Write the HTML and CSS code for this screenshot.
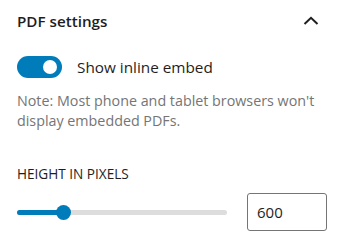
FILE: index.html
```html
<!DOCTYPE html>
<html lang="en">
<head>
    <meta charset="UTF-8">
    <meta name="viewport" content="width=device-width, initial-scale=1.0">
    <title>PDF settings</title>
    <link rel="stylesheet" href="styles.css">
</head>
<body>
    <div class="panel">
        <div class="panel-header">
            <h2>PDF settings</h2>
            <svg class="chevron" width="16" height="10" viewBox="0 0 16 10">
                <path d="M1.5 8 L8 1.8 L14.5 8" fill="none" stroke="#1e1e1e" stroke-width="2"/>
            </svg>
        </div>
        <div class="toggle-row">
            <span class="toggle"><span class="knob"></span></span>
            <span class="toggle-label">Show inline embed</span>
        </div>
        <p class="help">Note: Most phone and tablet browsers won't display embedded PDFs.</p>
        <div class="field-label">HEIGHT IN PIXELS</div>
        <div class="range-row">
            <div class="slider">
                <div class="track"></div>
                <div class="fill" style="width: 46px"></div>
                <div class="thumb" style="left: 46px"></div>
            </div>
            <input class="number" type="text" value="600">
        </div>
    </div>
</body>
</html>
```

FILE: styles.css
```css
body {
    margin: 0;
    background: #fff;
    color: #1e1e1e;
    font-family: "Open Sans", "Noto Sans", sans-serif;
}
.panel {
    padding: 0 17px;
}
.panel-header {
    display: flex;
    justify-content: space-between;
    align-items: center;
    height: 42px;
}
.panel-header h2 {
    margin: 0;
    font-size: 15.2px;
    font-weight: 600;
    line-height: 20px;
}
.chevron {
    margin-right: 9px;
}
.toggle-row {
    display: flex;
    align-items: center;
    margin-top: 14px;
    height: 22px;
}
.toggle {
    position: relative;
    width: 45px;
    height: 22px;
    border-radius: 11px;
    background: #007cba;
    margin-right: 15px;
}
.toggle .knob {
    position: absolute;
    top: 4px;
    right: 5px;
    width: 14px;
    height: 14px;
    border-radius: 50%;
    background: #fff;
}
.toggle-label {
    font-size: 15.3px;
}
.help {
    margin: 13px 0 0;
    font-size: 14.3px;
    line-height: 20px;
    color: #757575;
}
.field-label {
    margin-top: 35px;
    font-size: 13.6px;
    font-weight: 500;
    line-height: 16px;
}
.range-row {
    display: flex;
    align-items: center;
    gap: 20px;
    margin-top: 11px;
}
.slider {
    position: relative;
    width: 210px;
    height: 38px;
}
.slider .track,
.slider .fill {
    position: absolute;
    left: 0;
    top: 17px;
    height: 5px;
    border-radius: 3px;
}
.slider .track {
    width: 100%;
    background: #ddd;
}
.slider .fill {
    background: #007cba;
}
.slider .thumb {
    position: absolute;
    top: 12px;
    width: 15px;
    height: 15px;
    margin-left: -7px;
    border-radius: 50%;
    background: #007cba;
}
.number {
    box-sizing: border-box;
    width: 80px;
    height: 38px;
    padding: 0 9px;
    border: 1px solid #757575;
    border-radius: 3px;
    font-family: inherit;
    font-size: 15px;
    color: #1e1e1e;
}
```
